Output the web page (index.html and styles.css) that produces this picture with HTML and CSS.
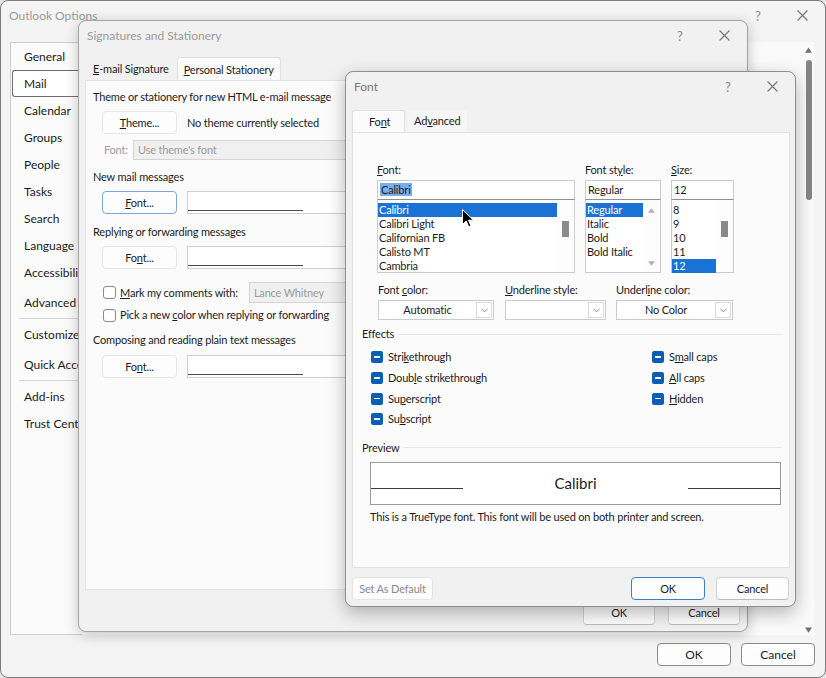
FILE: index.html
```html
<!DOCTYPE html>
<html lang="en">
<head>
<meta charset="utf-8">
<title>Outlook Options</title>
<link rel="stylesheet" href="styles.css">
</head>
<body>
<div class="desktop">

  <section class="win win-options">
    <header class="titlebar">
      <span class="title">Outlook Options</span>
      <span class="tb-btn">?</span>
      <span class="tb-btn"><svg class="x-ico" viewBox="0 0 10 10"><path d="M0.5 0.5L9.5 9.5M9.5 0.5L0.5 9.5"/></svg></span>
    </header>
    <div class="opt-body">
      <nav class="nav">
        <div class="nav-item">General</div>
        <div class="nav-item sel">Mail</div>
        <div class="nav-item">Calendar</div>
        <div class="nav-item">Groups</div>
        <div class="nav-item">People</div>
        <div class="nav-item">Tasks</div>
        <div class="nav-item">Search</div>
        <div class="nav-item">Language</div>
        <div class="nav-item">Accessibility</div>
        <div class="nav-item gap">Advanced</div>
        <div class="nav-sep"></div>
        <div class="nav-item">Customize Ribbon</div>
        <div class="nav-item gap">Quick Access Toolbar</div>
        <div class="nav-sep"></div>
        <div class="nav-item">Add-ins</div>
        <div class="nav-item">Trust Center</div>
      </nav>
      <div class="opt-main"></div>
      <div class="vscroll">
        <svg class="sb-arrow" viewBox="0 0 8 6"><path d="M4 0L8 6H0z"/></svg>
        <div class="sb-track"><div class="sb-thumb"></div></div>
        <svg class="sb-arrow" viewBox="0 0 8 6"><path d="M0 0H8L4 6z"/></svg>
      </div>
    </div>
    <footer class="opt-foot">
      <button class="btn btn-lg">OK</button>
      <button class="btn btn-lg">Cancel</button>
    </footer>
  </section>

  <section class="win win-sig">
    <header class="titlebar">
      <span class="title">Signatures and Stationery</span>
      <span class="tb-btn">?</span>
      <span class="tb-btn"><svg class="x-ico" viewBox="0 0 10 10"><path d="M0.5 0.5L9.5 9.5M9.5 0.5L0.5 9.5"/></svg></span>
    </header>
    <div class="tabs sig-tabs">
      <div class="tab"><u>E</u>-mail Signature</div>
      <div class="tab active"><u>P</u>ersonal Stationery</div>
    </div>
    <div class="panel sig-panel">
      <div class="stitle first">Theme or stationery for new HTML e-mail message</div>
      <div class="srow r7">
        <button class="btn btn-s"><u>T</u>heme...</button>
        <span>No theme currently selected</span>
      </div>
      <div class="srow-font">
        <span class="flabel">Font:</span>
        <div class="field disabled wide">Use theme's font</div>
      </div>
      <div class="stitle m10">New mail messages</div>
      <div class="srow r7">
        <button class="btn btn-s focus"><u>F</u>ont...</button>
        <div class="sample"><div class="sample-line"></div></div>
      </div>
      <div class="stitle m11">Replying or forwarding messages</div>
      <div class="srow r7">
        <button class="btn btn-s">Fo<u>n</u>t...</button>
        <div class="sample"><div class="sample-line"></div></div>
      </div>
      <div class="chkrow c1">
        <span class="cb"></span>
        <span class="cblabel"><u>M</u>ark my comments with:</span>
        <div class="field disabled name">Lance Whitney</div>
      </div>
      <div class="chkrow c2">
        <span class="cb"></span>
        <span class="cblabel">Pick a new <u>c</u>olor when replying or forwarding</span>
      </div>
      <div class="stitle m11">Composing and reading plain text messages</div>
      <div class="srow r8">
        <button class="btn btn-s">Fo<u>n</u>t...</button>
        <div class="sample"><div class="sample-line"></div></div>
      </div>
    </div>
    <footer class="dlg-foot sig-foot">
      <button class="btn btn-sig">OK</button>
      <button class="btn btn-sig">Cancel</button>
    </footer>
  </section>

  <section class="win win-font">
    <header class="titlebar">
      <span class="title dark">Font</span>
      <span class="tb-btn">?</span>
      <span class="tb-btn"><svg class="x-ico" viewBox="0 0 10 10"><path d="M0.5 0.5L9.5 9.5M9.5 0.5L0.5 9.5"/></svg></span>
    </header>
    <div class="tabs font-tabs">
      <div class="tab active ftab">Fo<u>n</u>t</div>
      <div class="tab atab">Ad<u>v</u>anced</div>
    </div>
    <div class="panel font-panel">
      <div class="fp-lists">
        <div class="fcol">
          <div class="flbl"><u>F</u>ont:</div>
          <div class="combo-in"><span class="hl">Calibri</span></div>
          <div class="listbox">
            <div class="items">
              <div class="li sel">Calibri</div>
              <div class="li">Calibri Light</div>
              <div class="li">Californian FB</div>
              <div class="li">Calisto MT</div>
              <div class="li">Cambria</div>
            </div>
            <div class="lscroll thumbed"><div class="lthumb"></div></div>
          </div>
        </div>
        <div class="fcol">
          <div class="flbl">Font st<u>y</u>le:</div>
          <div class="combo-in">Regular</div>
          <div class="listbox">
            <div class="items">
              <div class="li sel">Regular</div>
              <div class="li">Italic</div>
              <div class="li">Bold</div>
              <div class="li">Bold Italic</div>
            </div>
            <div class="lscroll arrows">
              <svg class="larrow" viewBox="0 0 8 5"><path d="M4 0L8 5H0z"/></svg>
              <svg class="larrow" viewBox="0 0 8 5"><path d="M0 0H8L4 5z"/></svg>
            </div>
          </div>
        </div>
        <div class="fcol">
          <div class="flbl"><u>S</u>ize:</div>
          <div class="combo-in">12</div>
          <div class="listbox">
            <div class="items">
              <div class="li">8</div>
              <div class="li">9</div>
              <div class="li">10</div>
              <div class="li">11</div>
              <div class="li sel">12</div>
            </div>
            <div class="lscroll thumbed"><div class="lthumb"></div></div>
          </div>
        </div>
      </div>

      <div class="fp-drops">
        <div class="fcol">
          <div class="flbl">Font <u>c</u>olor:</div>
          <div class="dd w116"><span class="dd-text">Automatic</span><span class="dd-btn"><svg viewBox="0 0 8 5"><path d="M0.5 0.5L4 4L7.5 0.5"/></svg></span></div>
        </div>
        <div class="fcol">
          <div class="flbl"><u>U</u>nderline style:</div>
          <div class="dd w101"><span class="dd-text"></span><span class="dd-btn"><svg viewBox="0 0 8 5"><path d="M0.5 0.5L4 4L7.5 0.5"/></svg></span></div>
        </div>
        <div class="fcol">
          <div class="flbl">Underl<u>i</u>ne color:</div>
          <div class="dd w117"><span class="dd-text">No Color</span><span class="dd-btn"><svg viewBox="0 0 8 5"><path d="M0.5 0.5L4 4L7.5 0.5"/></svg></span></div>
        </div>
      </div>

      <div class="fp-sect s-effects"><span>Effects</span><span class="sect-line"></span></div>
      <div class="fx">
        <div class="fx-item"><span class="cbx"></span><span>Stri<u>k</u>ethrough</span></div>
        <div class="fx-item"><span class="cbx"></span><span>Doub<u>l</u>e strikethrough</span></div>
        <div class="fx-item"><span class="cbx"></span><span>Su<u>p</u>erscript</span></div>
        <div class="fx-item"><span class="cbx"></span><span>Su<u>b</u>script</span></div>
        <div class="fx-item"><span class="cbx"></span><span>S<u>m</u>all caps</span></div>
        <div class="fx-item"><span class="cbx"></span><span><u>A</u>ll caps</span></div>
        <div class="fx-item"><span class="cbx"></span><span><u>H</u>idden</span></div>
      </div>

      <div class="fp-sect s-preview"><span>Preview</span><span class="sect-line"></span></div>
      <div class="preview">
        <span class="pv-line"></span>
        <span class="pv-text">Calibri</span>
        <span class="pv-line"></span>
      </div>
      <div class="pv-desc">This is a TrueType font. This font will be used on both printer and screen.</div>
    </div>
    <footer class="dlg-foot font-foot">
      <button class="btn btn-def">Set As Default</button>
      <span class="spacer"></span>
      <button class="btn btn-ok">OK</button>
      <button class="btn btn-cancel">Cancel</button>
    </footer>
  </section>

  <svg class="cursor" viewBox="0 0 12 19"><path d="M0.5 0.5V15.5L4.2 12L6.8 18L9 17L6.5 11.2H11.5Z"/></svg>
</div>
</body>
</html>
```
FILE: styles.css
```css
* { box-sizing: border-box; margin: 0; padding: 0; }
html, body { width: 826px; height: 678px; overflow: hidden; }
body {
  font-family: Lato, "Noto Sans", sans-serif;
  font-size: 11px;
  line-height: 14px;
  letter-spacing: -0.18px;
  color: #1c1c1c;
  background: #e6e6e6;
}
u { text-decoration: underline; text-underline-offset: 1px; text-decoration-thickness: 1px; }
button { font: inherit; color: inherit; letter-spacing: inherit; cursor: default; }

.desktop { position: relative; width: 826px; height: 678px; }

/* windows */
.win {
  position: absolute;
  display: flex;
  flex-direction: column;
  border: 1px solid #a3a3a3;
  border-radius: 8px;
  background: #f3f3f3;
}
.win-options { left: 0; top: 0; width: 826px; height: 678px; border-color: #7d7d7d; background: #f4f4f4; }
.win-sig { left: 78px; top: 20px; width: 670px; height: 612px; box-shadow: 0 3px 14px rgba(0,0,0,.22); background: #f1f1f1; }
.win-font { left: 345px; top: 71px; width: 451px; height: 536px; box-shadow: 0 6px 18px rgba(0,0,0,.28); border-color: #8f8f8f; background: #f1f1f1; }

.titlebar { display: flex; align-items: center; height: 29px; flex: none; padding-right: 1px; letter-spacing: 0; }
.title { flex: 1; padding-left: 8px; font-size: 12px; color: #9a9a9a; }
.title.dark { color: #7a7a7a; }
.tb-btn { width: 44px; display: flex; justify-content: center; align-items: center; color: #8a8a8a; font-size: 13px; }
.x-ico { width: 11px; height: 11px; stroke: #7a7a7a; stroke-width: 1.1; fill: none; }

/* outlook options */
.opt-body { flex: 1; display: flex; padding: 12px 11px 0 9px; min-height: 0; }
.nav { width: 72px; background: #fbfbfb; border: 1px solid #cdcdcd; border-right: none; flex: none; }
.nav-item {
  height: 27px;
  line-height: 25px;
  padding-left: 11px;
  margin-left: 1px;
  font-size: 12px;
  letter-spacing: 0;
  white-space: nowrap;
  overflow: hidden;
  border: 1px solid transparent;
  border-right: none;
  border-radius: 3px 0 0 3px;
  color: #1a1a1a;
}
.nav-item.sel { background: #fff; border-color: #6e6e6e; }
.nav-item.gap { margin-top: 3px; }
.nav-sep { height: 1px; background: #d5d5d5; margin: 2px 0 2px 8px; }
.opt-main { flex: 1; background: #fafafa; }
.vscroll { width: 11px; display: flex; flex-direction: column; align-items: center; padding: 5px 0 2px; background: #fafafa; }
.sb-arrow { width: 7px; height: 6px; fill: #707070; flex: none; }
.sb-track { flex: 1; padding-top: 7px; }
.sb-thumb { width: 6px; height: 140px; background: #858585; border-radius: 3px; }
.opt-foot { height: 42px; flex: none; display: flex; justify-content: flex-end; gap: 10px; padding: 8px 10px 0 0; }

/* buttons */
.btn {
  height: 23px;
  width: 74px;
  background: #fdfdfd;
  border: 1px solid #d3d3d3;
  border-bottom-color: #bcbcbc;
  border-radius: 4px;
  font-size: 11px;
}
.btn-lg { border-color: #8b8b8b; font-size: 12px; letter-spacing: 0; }
.btn-s { width: 75px; border-color: #e6e6e6; flex: none; }
.btn-s.focus { border-color: #7fa6d6; }

/* tabs & panels */
.tabs { display: flex; flex: none; }
.tab { padding: 0 8px; white-space: nowrap; }
.tab.active { background: #fbfbfb; border: 1px solid #e0e0e0; border-bottom: none; border-radius: 3px 3px 0 0; }
.sig-tabs { height: 23px; margin-top: 7px; padding-left: 6px; line-height: 23px; }
.sig-tabs .tab.active { padding: 0 6px; }
.panel { flex: 1; background: #fbfbfb; border: 1px solid #e2e2e2; min-height: 0; }
.sig-panel { margin: 0 7px 0 6px; padding-top: 9px; }
.dlg-foot { flex: none; display: flex; }
.sig-foot { height: 41px; padding: 10px 7px 0 0; justify-content: flex-end; gap: 13px; }
.btn-sig { width: 72px; height: 25px; }

/* signatures panel */
.stitle { padding-left: 7px; height: 14px; white-space: nowrap; }
.m10 { margin-top: 10px; }
.m11 { margin-top: 11px; }
.srow { display: flex; align-items: center; gap: 10px; padding-left: 16px; height: 23px; white-space: nowrap; }
.r7 { margin-top: 7px; }
.r8 { margin-top: 8px; }
.srow-font { display: flex; align-items: center; margin-top: 6px; padding-left: 18px; height: 20px; }
.flabel { width: 29px; color: #9a9a9a; }
.field { height: 20px; border: 1px solid #d4d4d4; padding-left: 4px; line-height: 18px; white-space: nowrap; }
.field.disabled { background: #f0f0f0; color: #9b9b9b; }
.field.wide { width: 520px; }
.sample { width: 420px; height: 23px; background: #fff; border: 1px solid #cfcfcf; }
.sample-line { margin: 18px 0 0 0; width: 115px; border-top: 1px solid #4a4a4a; }
.chkrow { display: flex; align-items: center; padding-left: 17px; white-space: nowrap; }
.c1 { margin-top: 13px; height: 21px; }
.c2 { margin-top: 5px; height: 14px; }
.cb { width: 13px; height: 13px; border: 1px solid #8a8a8a; border-radius: 3px; background: #fff; flex: none; }
.cblabel { margin-left: 4px; }
.field.name { margin-left: 11px; width: 200px; height: 21px; line-height: 19px; }

/* font dialog */
.font-tabs { height: 22px; margin-top: 9px; padding-left: 6px; line-height: 22px; }
.ftab { width: 53px; padding: 0 0 0 16px; }
.atab { margin-left: 2px; padding: 0 7px; background: #f6f6f6; }
.font-panel { margin: 0 5px 0 6px; }
.font-foot { height: 38px; padding: 9px 6px 0 6px; gap: 11px; }
.spacer { flex: 1; }
.btn-def { width: 81px; color: #8a8a8a; border-color: #e4e4e4; }
.btn-ok { width: 74px; border-color: #3b7dc6; background: #fcfdfe; }
.btn-cancel { width: 73px; }

.fp-lists { display: grid; grid-template-columns: 198px 76px 63px; column-gap: 10px; padding: 30px 0 0 24px; }
.flbl { height: 14px; margin-bottom: 3px; white-space: nowrap; }
.combo-in { height: 20px; border: 1px solid #cbcbcb; border-bottom-color: #8f8f8f; background: #fff; padding: 1px 2px 0; line-height: 16px; }
.hl { background: #78afe8; padding: 0 1px; }
.listbox { height: 73px; border: 1px solid #cbcbcb; border-top: none; background: #fff; display: flex; }
.items { flex: 1; padding-top: 3px; min-width: 0; }
.li { height: 14px; line-height: 14px; padding-left: 1px; white-space: nowrap; }
.li.sel { background: #1a72d4; color: #fff; }
.lscroll { width: 17px; flex: none; display: flex; flex-direction: column; align-items: center; background: #fdfdfd; }
.lscroll.thumbed { padding-top: 21px; }
.lthumb { width: 7px; height: 16px; background: #8a8a8a; }
.lscroll.arrows { justify-content: space-between; padding: 8px 0 6px; }
.larrow { width: 7px; height: 5px; fill: #b0b0b0; }

.fp-drops { display: grid; grid-template-columns: 117px 101px 117px; column-gap: 10px; padding-left: 25px; margin-top: 10px; }
.dd { height: 20px; border: 1px solid #cbcbcb; background: #fff; display: flex; align-items: center; }
.w116 { width: 116px; }
.w101 { width: 101px; }
.w117 { width: 117px; }
.dd-text { flex: 1; text-align: center; }
.dd-btn { width: 16px; height: 16px; margin-right: 1px; border: 1px solid #dadada; display: flex; align-items: center; justify-content: center; }
.dd-btn svg { width: 7px; height: 5px; stroke: #7a7a7a; fill: none; stroke-width: 1; }

.fp-sect { display: flex; align-items: center; gap: 4px; padding: 0 7px 0 9px; height: 14px; }
.s-effects { margin-top: 7px; }
.s-preview { margin-top: 11px; }
.sect-line { flex: 1; border-top: 1px solid #e6e6e6; }
.fx { display: grid; grid-auto-flow: column; grid-template-rows: repeat(4, 20.7px); grid-template-columns: 281px auto; margin-top: 6px; padding-left: 18px; }
.fx-item { display: flex; align-items: center; gap: 5px; white-space: nowrap; }
.cbx { width: 12px; height: 12px; border-radius: 2px; background: #0a5fb4; position: relative; flex: none; }
.cbx::after { content: ""; position: absolute; left: 3px; top: 5px; width: 6px; height: 1.5px; background: #fff; }

.preview { display: flex; align-items: center; justify-content: space-between; margin: 7px 0 0 17px; width: 411px; height: 43px; background: #fff; border: 1px solid #9a9a9a; }
.pv-line { width: 92px; height: 1px; background: #3c3c3c; margin-top: 11px; }
.pv-text { font-size: 15px; letter-spacing: 0; color: #222; }
.pv-desc { margin: 5px 0 0 17px; white-space: nowrap; }

.cursor { position: absolute; left: 462px; top: 209px; width: 12px; height: 19px; fill: #000; stroke: #fff; stroke-width: 1; }
```
